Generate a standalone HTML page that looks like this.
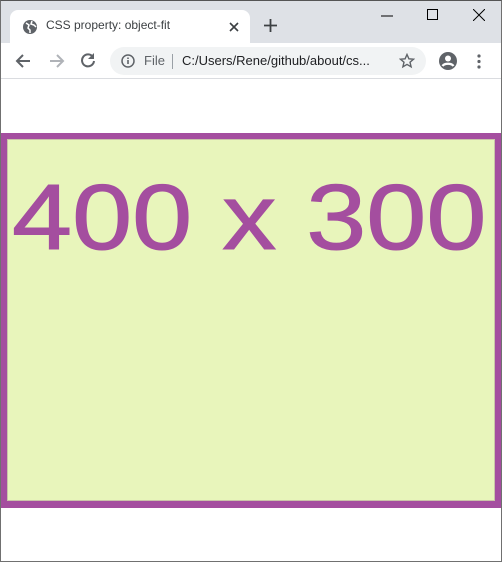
<!DOCTYPE html>
<html><head><style>
*{margin:0;padding:0;box-sizing:border-box}
body{width:502px;height:562px;overflow:hidden;background:#fff;font-family:"Liberation Sans",Arial,sans-serif;position:relative}
.win{position:absolute;inset:0;border:1px solid #707070;border-top-color:#555}
.tabbar{position:absolute;left:1px;top:1px;width:500px;height:42px;background:#dee1e6}
.tab{position:absolute;left:9px;top:9px;width:240px;height:34px;background:#fff;border-radius:8px 8px 0 0}
.tab .t{position:absolute;left:36px;top:8px;font-size:12px;color:#3c4043}
.tool{position:absolute;left:1px;top:43px;width:500px;height:36px;background:#fff;border-bottom:1px solid #dadce0}
.omni{position:absolute;left:109px;top:4px;width:316px;height:28px;background:#f1f3f4;border-radius:14px}
.omni .f{position:absolute;left:34px;top:6px;font-size:13px;color:#5f6368}
.omni .u{position:absolute;left:72px;top:6px;font-size:13px;color:#202124}
.omni .sep{position:absolute;left:62px;top:7px;width:1px;height:15px;background:#9aa0a6}
.box{position:absolute;left:1px;top:133px;width:500px;height:375px;background:#a44e9f}
.in{position:absolute;left:6px;top:6px;width:488px;height:362px;background:#e8f5bb;border:1px solid #c9c4a8;overflow:hidden}
.big{position:absolute;left:4px;top:22px;font-size:108px;color:#a44e9f;white-space:nowrap;line-height:1.15;transform:scale(1,0.86);transform-origin:0 13px;-webkit-text-stroke:1.2px #a44e9f}
svg{position:absolute}
</style></head><body>
<div class="tabbar">
 <div class="tab"><svg style="left:12px;top:9px" width="16" height="16" viewBox="0 0 16 16"><circle cx="8" cy="8" r="7" fill="#5f6368"/><path d="M4 4l3 2-1 3 2 2v3M10 2l-1 3 3 1 2 2" stroke="#fff" stroke-width="1.5" fill="none"/></svg><span class="t">CSS property: object-fit</span>
 <svg style="left:219px;top:12px" width="10" height="10"><path d="M1 1L9 9M9 1L1 9" stroke="#3c4043" stroke-width="1.6"/></svg></div>
 <svg style="left:263px;top:18px" width="13" height="13"><path d="M6.5 0v13M0 6.5h13" stroke="#3c4043" stroke-width="1.8"/></svg>
 <svg style="left:380px;top:14px" width="12" height="2"><path d="M0 1h12" stroke="#000"/></svg>
 <svg style="left:426px;top:8px" width="11" height="11"><rect x=".5" y=".5" width="10" height="10" fill="none" stroke="#000"/></svg>
 <svg style="left:472px;top:8px" width="12" height="12"><path d="M0 0L12 12M12 0L0 12" stroke="#000"/></svg>
</div>
<div class="tool">
 <svg style="left:14px;top:10px" width="16" height="16"><path d="M15 8H2M8 2L2 8l6 6" stroke="#5f6368" stroke-width="2" fill="none"/></svg>
 <svg style="left:48px;top:10px" width="16" height="16"><path d="M1 8h13M8 2l6 6-6 6" stroke="#b0b3b8" stroke-width="2" fill="none"/></svg>
 <svg style="left:79px;top:9px" width="16" height="16"><path d="M13 5A6 6 0 1 0 14 9" stroke="#5f6368" stroke-width="2" fill="none"/><path d="M14 1v6H8z" fill="#5f6368"/></svg>
 <div class="omni"><svg style="left:11px;top:7px" width="14" height="14"><circle cx="7" cy="7" r="6" fill="none" stroke="#5f6368" stroke-width="1.5"/><path d="M7 6v4M7 3.5v1.5" stroke="#5f6368" stroke-width="1.6"/></svg>
 <span class="f">File</span><div class="sep"></div><span class="u">C:/Users/Rene/github/about/cs...</span>
 <svg style="left:289px;top:6px" width="16" height="16"><path d="M8 1.5l1.9 4.3 4.6.4-3.5 3 1.1 4.6L8 11.4l-4.1 2.4 1.1-4.6-3.5-3 4.6-.4z" fill="none" stroke="#5f6368" stroke-width="1.4"/></svg></div>
 <svg style="left:437px;top:8px" width="20" height="20"><circle cx="10" cy="10" r="9" fill="#5f6368"/><circle cx="10" cy="7.5" r="3" fill="#fff"/><path d="M4.5 15c2-3 9-3 11 0" stroke="#fff" stroke-width="2.2" fill="none"/></svg>
 <svg style="left:476px;top:11px" width="4" height="16"><circle cx="2" cy="2" r="1.6" fill="#5f6368"/><circle cx="2" cy="7.5" r="1.6" fill="#5f6368"/><circle cx="2" cy="13" r="1.6" fill="#5f6368"/></svg>
</div>
<div class="box"><div class="in"><div class="big">400 x 300</div></div></div>
<div class="win"></div>
</body></html>
